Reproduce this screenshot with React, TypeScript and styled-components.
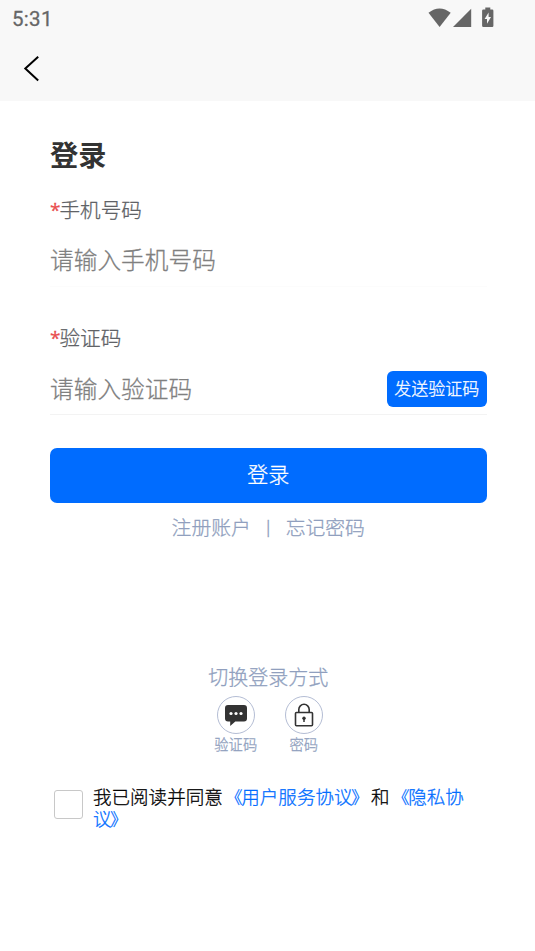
import React from "react";
import styled, { createGlobalStyle } from "styled-components";

const GlobalStyle = createGlobalStyle`
  * { box-sizing: border-box; }
  body {
    margin: 0;
    background: #fff;
    font-family: Roboto, "Noto Sans CJK SC", sans-serif;
    font-weight: 300;
    -webkit-text-stroke: 0.28px currentColor;
  }
`;

const Screen = styled.div`
  width: 535px;
  height: 951px;
  background: #fff;
  overflow: hidden;
`;

const TopArea = styled.header`
  height: 101px;
  background: #f8f8f8;
`;

const StatusBar = styled.div`
  height: 36px;
  padding: 0 40px 0 12px;
  display: flex;
  justify-content: space-between;
  align-items: center;
  color: #666;
`;

const Clock = styled.span`
  font: 400 20.5px/36px Roboto, sans-serif;
  letter-spacing: 0.3px;
  padding-top: 2px;
`;

const NavBar = styled.div`
  height: 65px;
  padding: 19px 0 0 23px;
`;

const BackButton = styled.button`
  display: block;
  border: 0;
  padding: 0;
  background: none;
`;

const Main = styled.main`
  padding: 0 48.5px 0 50px;
`;

const Title = styled.h1`
  margin: 0;
  padding-top: 35px;
  font-size: 28.2px;
  line-height: 42px;
  font-weight: 700;
  -webkit-text-stroke: 0;
  color: #333;
`;

const Field = styled.div<{ $gap: number }>`
  padding-top: ${(p) => p.$gap}px;
`;

const Label = styled.label`
  display: flex;
  height: 30px;
  line-height: 30px;
  font-size: 20.6px;
  color: #606266;
`;

const Required = styled.span`
  width: 9.5px;
  color: #e94f4f;
  font-size: 19px;
  line-height: 28px;
  font-weight: 400;
  font-family: "Open Sans", sans-serif;
`;

const InputRow = styled.div<{ $lined?: boolean }>`
  display: flex;
  justify-content: space-between;
  align-items: center;
  height: 61px;
  padding-top: ${(p) => (p.$lined ? 11 : 10)}px;
  border-bottom: 1px solid ${(p) => (p.$lined ? "#f3f3f3" : "#fcfcfc")};
`;

const Input = styled.input`
  width: 300px;
  height: 40px;
  border: 0;
  padding: 0;
  outline: 0;
  background: transparent;
  font: 300 23.7px/40px Roboto, "Noto Sans CJK SC", sans-serif;
  -webkit-text-stroke: 0.28px #808080;
  &::placeholder { color: #808080; opacity: 1; }
`;

const PrimaryButton = styled.button<{ $small?: boolean }>`
  display: block;
  border: 0;
  padding: ${(p) => (p.$small ? "0 0 3px" : "0 0 6px")};
  width: ${(p) => (p.$small ? "99.5px" : "100%")};
  height: ${(p) => (p.$small ? 36 : 55)}px;
  margin-top: ${(p) => (p.$small ? -1 : 33)}px;
  border-radius: ${(p) => (p.$small ? 6 : 7)}px;
  background: #006cff;
  color: #fff;
  font-family: Roboto, "Noto Sans CJK SC", sans-serif;
  font-weight: 300;
  font-size: ${(p) => (p.$small ? 17 : 21)}px;
`;

const Links = styled.nav`
  display: flex;
  justify-content: center;
  height: 30px;
  margin-top: 11px;
  line-height: 30px;
  font-size: 19.8px;
  color: #909fbe;
`;

const Divider = styled.span`
  width: 35px;
  text-align: center;
`;

const Switcher = styled.section`
  margin-top: 119px;
  color: #909fbe;
`;

const SwitchTitle = styled.div`
  text-align: center;
  font-size: 20px;
  line-height: 30px;
`;

const Methods = styled.div`
  display: flex;
  justify-content: center;
  gap: 24px;
  margin-top: 3px;
  padding-left: 3px;
`;

const Method = styled.div`
  width: 44px;
  display: flex;
  flex-direction: column;
  align-items: center;
  font-size: 14.3px;
  line-height: 22px;
  white-space: nowrap;
`;

const MethodIcon = styled.span`
  width: 38px;
  height: 38px;
  border: 1px solid #b4bdd4;
  border-radius: 50%;
  display: flex;
  align-items: center;
  justify-content: center;
`;

const Agreement = styled.label`
  display: flex;
  margin: 30px 0 0 4px;
`;

const Checkbox = styled.input`
  appearance: none;
  flex: none;
  width: 29px;
  height: 29px;
  margin: 4px 10px 0 0;
  border: 1px solid #c8c8c8;
  border-radius: 3px;
  background: #fff;
`;

const Terms = styled.span`
  width: 380px;
  padding-top: 1px;
  color: #000;
  font-size: 18.55px;
  line-height: 22px;
`;

const TermsLink = styled.a`
  color: #006cff;
`;

const Bracket = styled.span<{ $open?: boolean }>`
  display: inline-block;
  width: 18.55px;
  font-size: 17px;
  line-height: 21px;
  text-align: left;
  text-indent: ${(p) => (p.$open ? 2.8 : -1.2)}px;
`;

export default function App() {
  return (
    <Screen>
      <GlobalStyle />
      <TopArea>
        <StatusBar>
          <Clock>5:31</Clock>
          <svg width="68" height="22" viewBox="427 7 68 22" fill="#666">
            <path d="M428.5 12.8Q439.5 4.2 450.7 12.8L439.6 27Z" />
            <path d="M471.2 8.7V27H453Z" />
            <path d="M485.3 7.6h5v2h1.9q1.2 0 1.2 1.2v14.9q0 1.3-1.2 1.3h-8.8q-1.3 0-1.3-1.3V10.8q0-1.2 1.3-1.2h1.9z" />
            <path d="M488.6 12.5l-4 6.4h2.4v4.9l4-6.7h-2.4z" fill="#f8f8f8" />
          </svg>
        </StatusBar>
        <NavBar>
          <BackButton aria-label="返回">
            <svg width="18" height="28" viewBox="0 0 18 28" fill="none">
              <path d="M15.2 1.7L2.3 13.6L15.2 25.6" stroke="#000" strokeWidth="2" />
            </svg>
          </BackButton>
        </NavBar>
      </TopArea>
      <Main>
        <Title>登录</Title>
        <Field $gap={18}>
          <Label htmlFor="phone"><Required>*</Required>手机号码</Label>
          <InputRow><Input id="phone" placeholder="请输入手机号码" /></InputRow>
        </Field>
        <Field $gap={37}>
          <Label htmlFor="code"><Required>*</Required>验证码</Label>
          <InputRow $lined>
            <Input id="code" placeholder="请输入验证码" />
            <PrimaryButton $small>发送验证码</PrimaryButton>
          </InputRow>
        </Field>
        <PrimaryButton>登录</PrimaryButton>
        <Links><span>注册账户</span><Divider>|</Divider><span>忘记密码</span></Links>
        <Switcher>
          <SwitchTitle>切换登录方式</SwitchTitle>
          <Methods>
            <Method>
              <MethodIcon>
                <svg width="24" height="24" viewBox="0 0 24 24">
                  <path d="M4 2h16q3 0 3 3v10.500q0 3-3 3H11.300L6.200 23V18.500H4q-3 0-3-3V5q0-3 3-3z" fill="#333" />
                  <g fill="#fff"><circle cx="7" cy="10.500" r="1.600" /><circle cx="12" cy="10.500" r="1.600" /><circle cx="17" cy="10.500" r="1.600" /></g>
                </svg>
              </MethodIcon>
              验证码
            </Method>
            <Method>
              <MethodIcon>
                <svg width="24" height="26" viewBox="0 0 24 26" fill="none" stroke="#333">
                  <rect x="3.500" y="10.500" width="17" height="13.200" rx="1" strokeWidth="1.600" />
                  <path d="M6.800 10.500V7.500a5.200 5.200 0 0 1 10.400 0V10.500" strokeWidth="1.600" />
                  <circle cx="12" cy="16.300" r="1.700" fill="#333" stroke="none" />
                  <path d="M12 16v4" strokeWidth="1.500" />
                </svg>
              </MethodIcon>
              密码
            </Method>
          </Methods>
        </Switcher>
        <Agreement>
          <Checkbox type="checkbox" />
          <Terms>
            我已阅读并同意<TermsLink><Bracket $open>《</Bracket>用户服务协议<Bracket>》</Bracket></TermsLink>和<TermsLink><Bracket $open>《</Bracket>隐私协议<Bracket>》</Bracket></TermsLink>
          </Terms>
        </Agreement>
      </Main>
    </Screen>
  );
}
